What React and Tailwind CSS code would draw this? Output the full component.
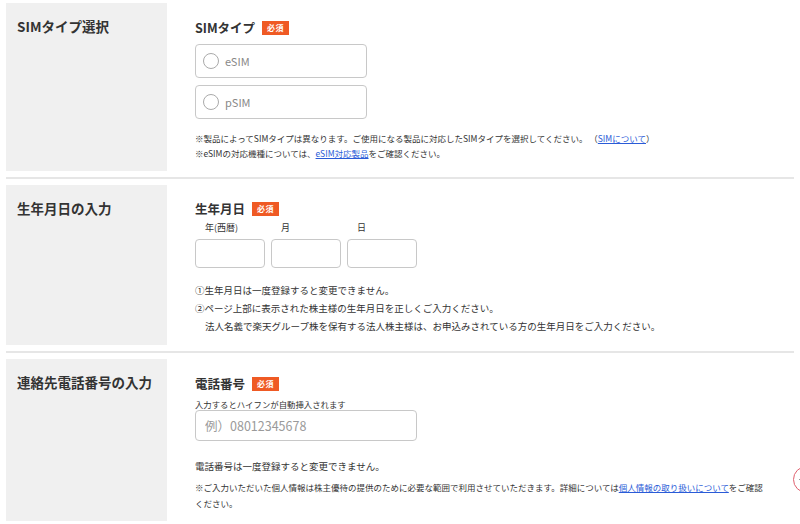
import React from "react"

function Badge() {
  return (
    <span className="inline-flex items-center justify-center h-[14px] px-[5px] bg-[#ef5a24] text-white text-[8px] font-bold leading-none tracking-[0.5px]">
      必須
    </span>
  )
}

function FieldTitle({ children }) {
  return (
    <div className="flex items-center gap-[7px] h-[14px]">
      <span className="text-[12.5px] font-bold leading-none text-[#333]">{children}</span>
      <Badge />
    </div>
  )
}

function Section({ title, children, rightClass }) {
  return (
    <div className="flex">
      <div className="w-[161px] shrink-0 bg-[#f0f0f0] pl-[11px] pt-[14px]">
        <h2 className="text-[13.5px] font-bold leading-[18px] text-[#333]">{title}</h2>
      </div>
      <div className={`flex-1 pl-[28px] pr-[22px] ${rightClass}`}>{children}</div>
    </div>
  )
}

function Divider() {
  return <div className="h-[2px] bg-[#e6e6e6] my-[6px]" />
}

function RadioBox({ label }) {
  return (
    <label className="flex items-center w-[172px] h-[34px] border border-[#c8c8c8] rounded-[4px] pl-[7px] gap-[6px] cursor-pointer">
      <span className="w-[16px] h-[16px] rounded-full border-[1.5px] border-[#aaa] bg-white" />
      <span className="text-[11px] text-[#888]">{label}</span>
    </label>
  )
}

function Link({ children }) {
  return <a href="#" className="text-[#2a5bd7] underline">{children}</a>
}

export default function App() {
  return (
    <div
      className="relative w-[800px] h-[524px] overflow-hidden bg-white pt-[3px] px-[6px] text-[#333]"
      style={{ fontFamily: '"Noto Sans CJK JP", "Noto Sans", sans-serif' }}
    >
      <Section title="SIMタイプ選択" rightClass="pt-[18px] pb-[10px]">
        <FieldTitle>SIMタイプ</FieldTitle>
        <div className="mt-[9px] flex flex-col gap-[7px]">
          <RadioBox label="eSIM" />
          <RadioBox label="pSIM" />
        </div>
        <div className="mt-[12px] text-[8.5px] leading-[15px]">
          <p>※製品によってSIMタイプは異なります。ご使用になる製品に対応したSIMタイプを選択してください。 （<Link>SIMについて</Link>）</p>
          <p>※eSIMの対応機種については、<Link>eSIM対応製品</Link>をご確認ください。</p>
        </div>
      </Section>

      <Divider />

      <Section title="生年月日の入力" rightClass="pt-[17px] pb-[10px]">
        <FieldTitle>生年月日</FieldTitle>
        <div className="mt-[6px] flex gap-[6px]">
          {["年(西暦)", "月", "日"].map((l) => (
            <div key={l} className="w-[70px]">
              <div className="pl-[10px] text-[9px] leading-[12px]">{l}</div>
              <input className="mt-[5px] w-[70px] h-[29px] border border-[#c8c8c8] rounded-[4px] outline-none" />
            </div>
          ))}
        </div>
        <div className="mt-[13px] text-[9.5px] leading-[18px]">
          <p>①生年月日は一度登録すると変更できません。</p>
          <p>②ページ上部に表示された株主様の生年月日を正しくご入力ください。</p>
          <p className="pl-[10px]">法人名義で楽天グループ株を保有する法人株主様は、お申込みされている方の生年月日をご入力ください。</p>
        </div>
      </Section>

      <Divider />

      <Section title="連絡先電話番号の入力" rightClass="pt-[18px] pb-[10px]">
        <FieldTitle>電話番号</FieldTitle>
        <div className="mt-[7px] text-[8.4px] leading-[12px]">入力するとハイフンが自動挿入されます</div>
        <input
          placeholder="例）08012345678"
          className="w-[222px] h-[31px] border border-[#c8c8c8] rounded-[4px] px-[9px] text-[12.5px] placeholder:text-[#9a9a9a] outline-none"
        />
        <p className="mt-[16px] text-[9.5px] leading-[18px]">電話番号は一度登録すると変更できません。</p>
        <p className="mt-[4px] text-[8.5px] leading-[16px]">
          ※ご入力いただいた個人情報は株主優待の提供のために必要な範囲で利用させていただきます。詳細については<Link>個人情報の取り扱いについて</Link>をご確認<br />ください。
        </p>
      </Section>

      <button className="absolute left-[793px] top-[466px] w-[27px] h-[27px] rounded-full border border-[#e0606e] bg-white flex items-center justify-center">
        <span className="w-[4px] h-[1px] bg-[#999] -ml-[12px]" />
      </button>
    </div>
  )
}
